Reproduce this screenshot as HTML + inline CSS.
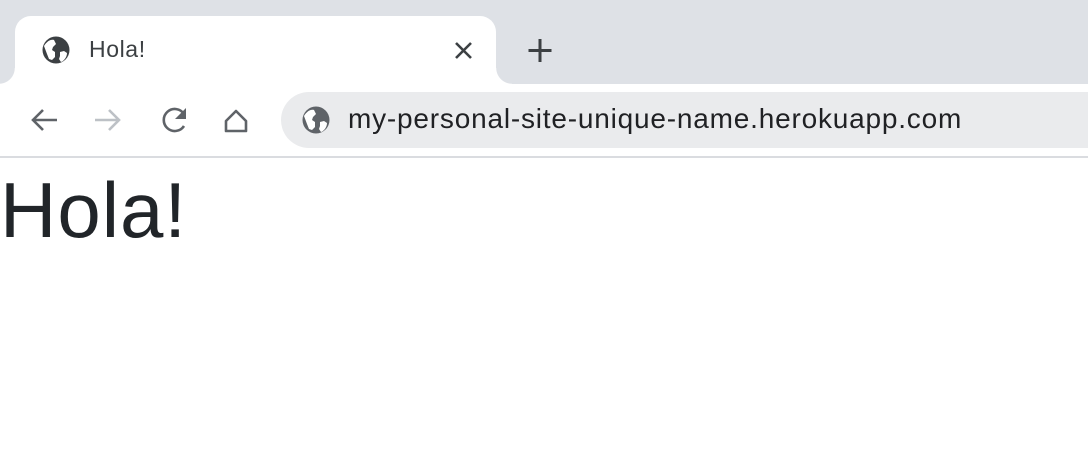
<!DOCTYPE html>
<html><head><style>
body{margin:0;width:1088px;height:464px;overflow:hidden;background:#fff;font-family:"Liberation Sans",Arial,sans-serif;position:relative}
.top{position:absolute;left:0;top:0;width:1088px;height:84px;background:#dee1e6}
.tab{position:absolute;left:15px;top:16px;width:481px;height:70px;background:#fff;border-radius:16px 16px 0 0}
.tab:before{content:"";position:absolute;left:-16px;bottom:2px;width:16px;height:16px;background:radial-gradient(circle at 0 0,#dee1e6 15.5px,#fff 16px)}
.tab:after{content:"";position:absolute;right:-16px;bottom:2px;width:16px;height:16px;background:radial-gradient(circle at 100% 0,#dee1e6 15.5px,#fff 16px)}
.bar{position:absolute;left:0;top:84px;width:1088px;height:72px;background:#fff;border-bottom:2px solid #dadce0}
.omni{position:absolute;left:281px;top:92px;width:840px;height:56px;border-radius:28px;background:#eaebed}
.t{position:absolute;color:#3c4043}
</style></head><body>
<div class="top"></div>
<div class="tab"></div>
<div class="bar"></div>
<div class="omni"></div>
<svg style="position:absolute;left:0;top:0" width="1088" height="160">
<g fill="#3c4043">
<circle cx="56" cy="50" r="13.5"/>
<circle cx="316" cy="120" r="13.5" fill="#5f6368"/>
</g>
<g fill="#fff">
<path d="M44 46c3-5 7-7 10-6l2 4-3 3-1 3 3 2 0 5-3 3-3-1-2-5z"/>
<path d="M60 52l4-1 3 2c0 4-3 8-6 9l-2-3 1-3z"/>
<path d="M304 116c3-5 7-7 10-6l2 4-3 3-1 3 3 2 0 5-3 3-3-1-2-5z"/>
<path d="M320 122l4-1 3 2c0 4-3 8-6 9l-2-3 1-3z"/>
</g>
<g stroke="#3c4043" stroke-width="2.6" fill="none">
<path d="M456 43l15 15M471 43l-15 15"/>
<path d="M540 39v23M528.5 50.5h23" stroke-width="3"/>
</g>
<g stroke="#5f6368" stroke-width="2.6" fill="none">
<path d="M57 120H33M43 110l-10 10 10 10"/>
<path d="M184 126a11 11 0 1 1 0-12"/>
<path d="M226 121l10-10 10 10v10h-20z" stroke-linejoin="round"/>
</g>
<path d="M186 108v11h-11z" fill="#5f6368"/>
<g stroke="#bdc1c6" stroke-width="2.6" fill="none"><path d="M95 120h24M109 110l10 10-10 10"/></g>
</svg>
<div class="t" style="left:89px;top:36px;font-size:23px;letter-spacing:0.6px">Hola!</div>
<div class="t" style="left:348px;top:103px;font-size:28px;letter-spacing:0.8px;color:#202124">my-personal-site-unique-name.herokuapp.com</div>
<div style="position:absolute;left:0;top:163px;font-size:78px;letter-spacing:1px;color:#212529;line-height:94px">Hola!</div>
</body></html>
